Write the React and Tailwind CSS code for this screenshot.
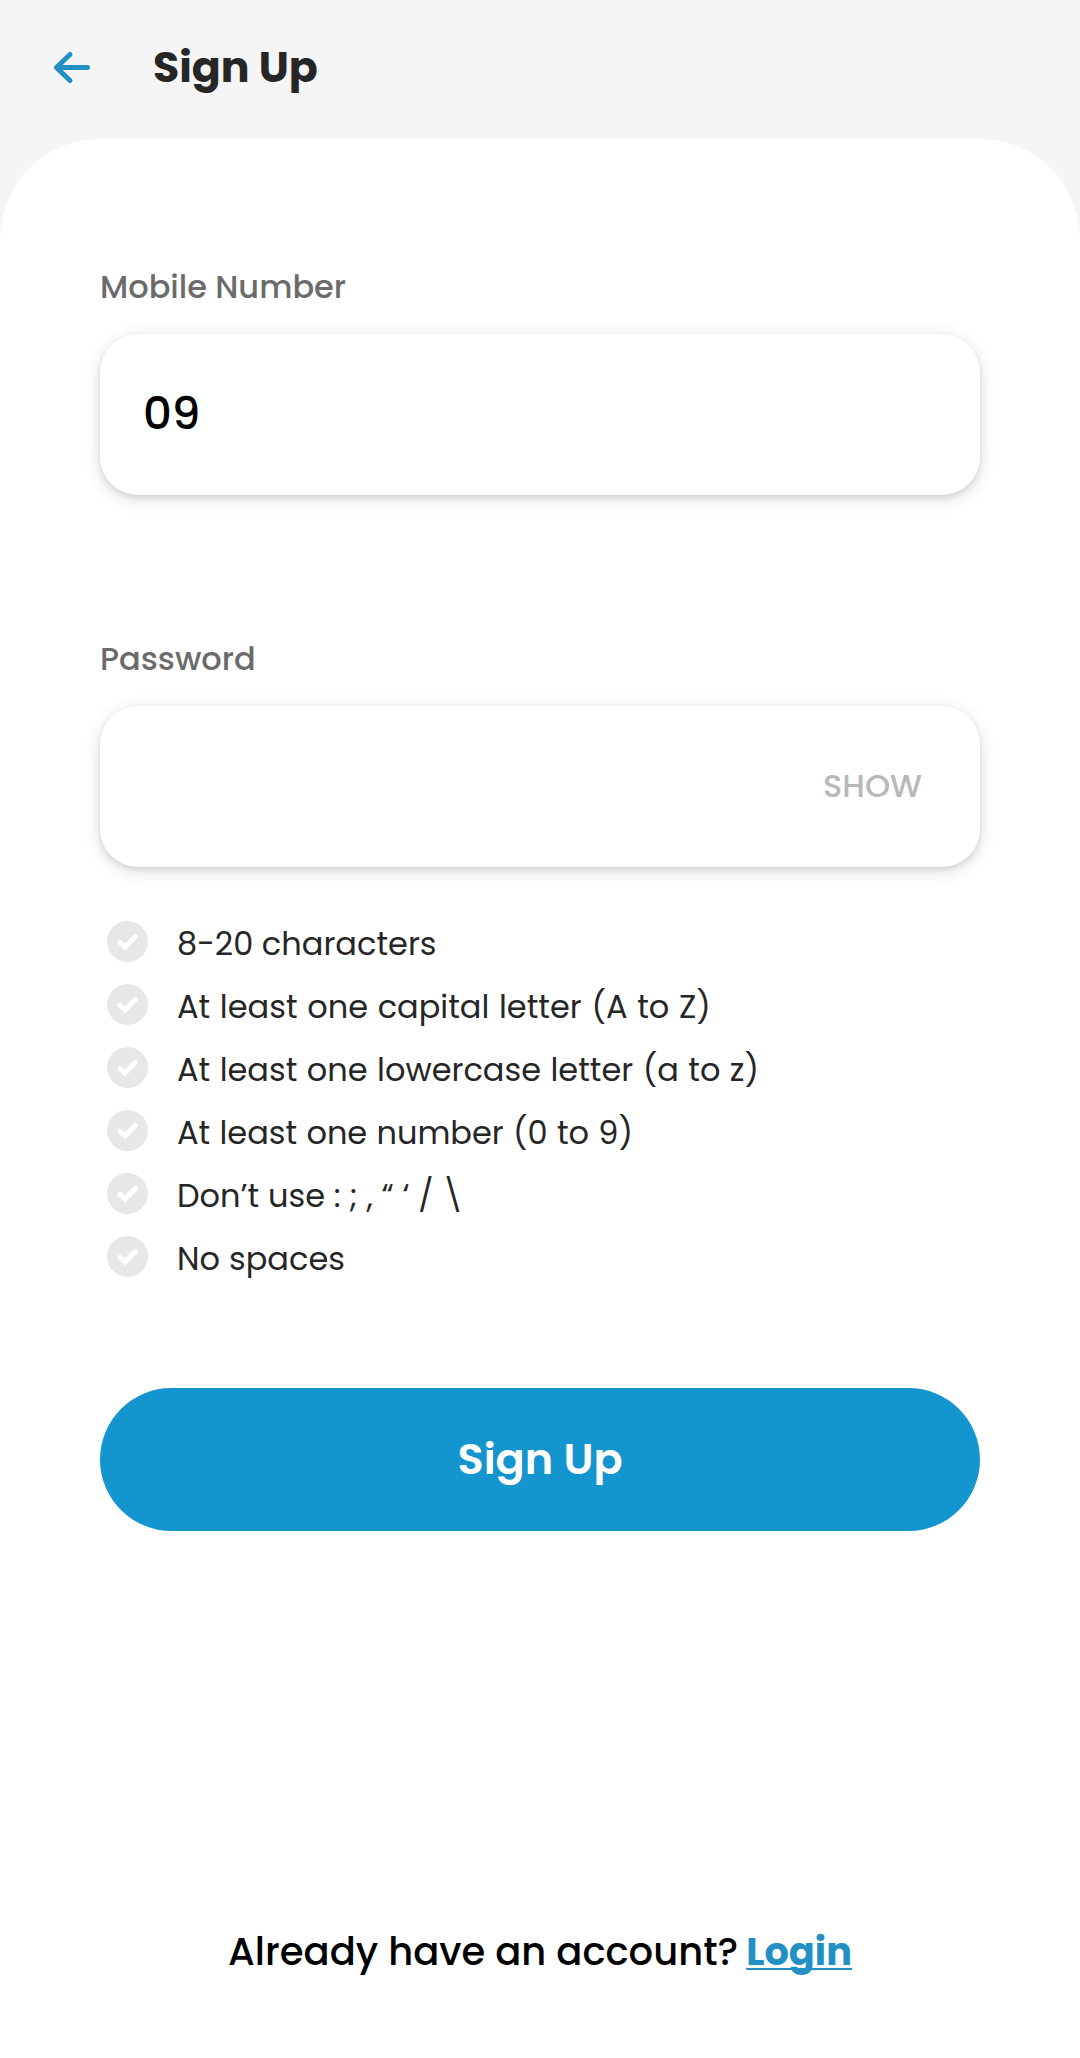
const rules = [
  { text: '8-20 characters', spacing: '[word-spacing:0px]' },
  { text: 'At least one capital letter (A to Z)', spacing: '[word-spacing:1.1px]' },
  { text: 'At least one lowercase letter (a to z)', spacing: '[word-spacing:0.9px]' },
  { text: 'At least one number (0 to 9)', spacing: '[word-spacing:0.7px]' },
  { text: 'Don’t use : ; , “ ‘ / \\', spacing: '[word-spacing:0.2px]' },
  { text: 'No spaces', spacing: '[word-spacing:0.5px]' },
];

function BackArrow() {
  return (
    <svg className="h-[36px] w-[40px]" viewBox="0 0 40 36" fill="none" stroke="#2390c5" strokeWidth="5" strokeLinecap="round" strokeLinejoin="round">
      <path d="M35.5 18.5H4.5M18 5.5L4.5 18.5L18 31.5" />
    </svg>
  );
}

function CheckBadge() {
  return (
    <svg className="h-[41px] w-[41px] shrink-0" viewBox="0 0 41 41" fill="none">
      <circle cx="20.5" cy="20.5" r="20.5" fill="#e7e7e7" />
      <path d="M13 21.5L18 26L28.3 15.5" stroke="#fff" strokeWidth="5" strokeLinecap="round" />
    </svg>
  );
}

function Field({ label, children }) {
  return (
    <div>
      <label className="block h-[40px] text-[32px] leading-[40px] font-medium whitespace-nowrap text-[#6b6b6b]">{label}</label>
      <div className="mt-[27px] flex h-[161px] items-center rounded-[38px] bg-white px-[43px] pb-px shadow-[0_4px_18px_rgba(0,0,0,0.12),0_3px_6px_rgba(0,0,0,0.10)]">
        {children}
      </div>
    </div>
  );
}

export default function App() {
  return (
    <div className="min-h-[2058px] w-[1080px] bg-[#f5f5f5] font-[Poppins,Inter,sans-serif]">
      <header className="flex h-[139px] items-center pb-[5px] pl-[52px]">
        <BackArrow />
        <h1 className="ml-[61px] text-[42.7px] leading-[52px] font-bold text-[#262626]">Sign Up</h1>
      </header>
      <main className="flex min-h-[1919px] flex-col rounded-t-[100px] bg-white px-[100px] pt-[128px]">
        <Field label="Mobile Number">
          <span className="text-[45px] leading-[60px] font-medium text-black">09</span>
        </Field>
        <div className="mt-[144px]">
          <Field label="Password">
            <span className="ml-auto pr-[15px] text-[32px] leading-[40px] font-medium text-[#b8b8b8]">SHOW</span>
          </Field>
        </div>
        <ul className="mt-[54px] flex flex-col gap-[22px] pl-[7px]">
          {rules.map((rule) => (
            <li key={rule.text} className="flex h-[41px] items-center">
              <CheckBadge />
              <span className={`ml-[29px] pt-[5px] text-[32px] leading-[40px] whitespace-nowrap text-[#262626] ${rule.spacing}`}>{rule.text}</span>
            </li>
          ))}
        </ul>
        <button className="mt-[111px] flex h-[143px] w-full items-center justify-center rounded-full bg-[#1595d0] pb-[2px] text-[43px] leading-[56px] font-semibold text-white">
          Sign Up
        </button>
        <p className="mt-[393px] flex pl-[128px] text-[38.5px] leading-[56px] font-medium whitespace-nowrap text-black">
          Already have an account?
          <a className="ml-[8px] text-[38.3px] font-bold text-[#2390c5] underline decoration-2 underline-offset-[3px] [text-decoration-skip-ink:none]">Login</a>
        </p>
      </main>
    </div>
  );
}
